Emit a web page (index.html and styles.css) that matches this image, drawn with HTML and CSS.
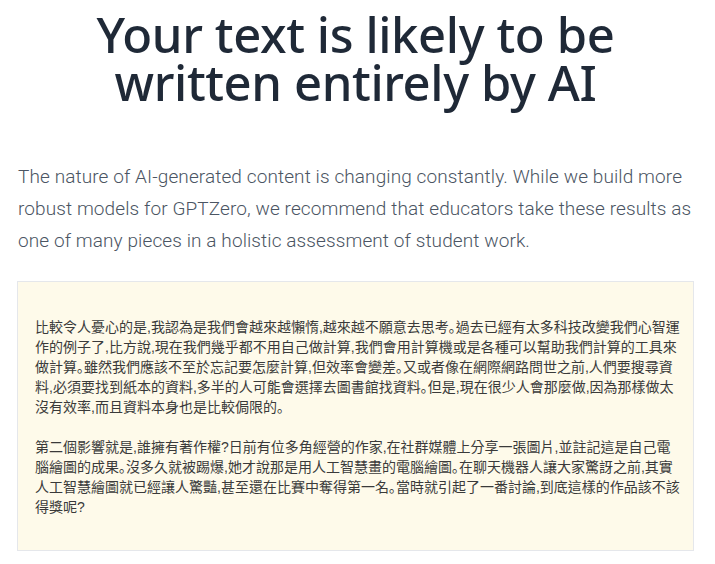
FILE: index.html
```html
<!DOCTYPE html>
<html lang="en">
<head>
<meta charset="utf-8">
<title>GPTZero result</title>
<link rel="stylesheet" href="styles.css">
</head>
<body>
<main class="page">
  <h1 class="title">Your text is likely to be<br>written entirely by AI</h1>
  <p class="note">The nature of AI-generated content is changing constantly. While we build more robust models for GPTZero, we recommend that educators take these results as one of many pieces in a holistic assessment of student work.</p>
  <div class="doc">
    <p class="doc-para">比較令人憂心的是,我認為是我們會越來越懶惰,越來越不願意去思考｡過去已經有太多科技改變我們心智運<br>作的例子了,比方說,現在我們幾乎都不用自己做計算,我們會用計算機或是各種可以幫助我們計算的工具來<br>做計算｡雖然我們應該不至於忘記要怎麼計算,但效率會變差｡又或者像在網際網路問世之前,人們要搜尋資<br>料,必須要找到紙本的資料,多半的人可能會選擇去圖書館找資料｡但是,現在很少人會那麼做,因為那樣做太<br>沒有效率,而且資料本身也是比較侷限的｡</p>
    <p class="doc-para">第二個影響就是,誰擁有著作權?日前有位多角經營的作家,在社群媒體上分享一張圖片,並註記這是自己電<br>腦繪圖的成果｡沒多久就被踢爆,她才說那是用人工智慧畫的電腦繪圖｡在聊天機器人讓大家驚訝之前,其實<br>人工智慧繪圖就已經讓人驚豔,甚至還在比賽中奪得第一名｡當時就引起了一番討論,到底這樣的作品該不該<br>得獎呢?</p>
  </div>
</main>
</body>
</html>
```
FILE: styles.css
```css
html, body {
  margin: 0;
  padding: 0;
  background: #ffffff;
}

.page {
  padding: 0 21px 0 17px;
}

.title {
  margin: 10px 0 0 0;
  font-family: "Noto Sans", "Open Sans", sans-serif;
  font-weight: 500;
  font-size: 49px;
  line-height: 48px;
  text-align: center;
  color: #1f2937;
  letter-spacing: -0.4px;
}

.note {
  margin: 55px 0 0 1px;
  font-family: Roboto, "Noto Sans", sans-serif;
  font-weight: 300;
  font-size: 19px;
  line-height: 32px;
  letter-spacing: 0.1px;
  color: #4b5563;
}

.doc {
  margin-top: 24px;
  border: 1px solid #e5e7eb;
  background: #fefaea;
  padding: 35px 16px 33px 17px;
}

.doc-para {
  margin: 0;
  white-space: nowrap;
  font-family: "Liberation Sans", "Noto Sans CJK TC", sans-serif;
  font-size: 14px;
  line-height: 20px;
  color: #3a3a3a;
}

.doc-para + .doc-para {
  margin-top: 20px;
}
```
